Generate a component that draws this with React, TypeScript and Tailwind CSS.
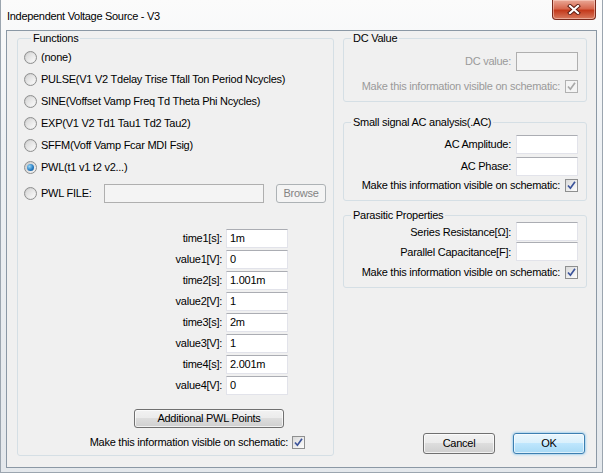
import React from 'react';

const ui = "font-['Liberation_Sans',Arial,sans-serif] text-[11px] tracking-[-0.25px] leading-[13px]";

function Radio({ checked }: { checked?: boolean }) {
  return (
    <span className="flex h-[13px] w-[13px] shrink-0 items-center justify-center rounded-full border border-[#8e8f8f] bg-[linear-gradient(135deg,#c9c9c9,#f7f7f7)]">
      {checked ? (
        <span className="h-[7px] w-[7px] rounded-full bg-[radial-gradient(circle_at_35%_35%,#9ad8f8,#2a7fc4_55%,#0d4a86)]" />
      ) : (
        <span className="h-[9px] w-[9px] rounded-full bg-[linear-gradient(135deg,#d6d6d6,#fbfbfb)]" />
      )}
    </span>
  );
}

function Check({ disabled }: { disabled?: boolean }) {
  return (
    <span
      className={
        disabled
          ? 'flex h-[13px] w-[13px] shrink-0 items-center justify-center border border-[#b1b1b1] bg-[#f4f4f4]'
          : 'flex h-[13px] w-[13px] shrink-0 items-center justify-center border border-[#8e8f8f] bg-[linear-gradient(135deg,#dadada,#fdfdfd)]'
      }
    >
      <svg width="11" height="11" viewBox="0 0 11 11">
        <path
          d="M2 5.5 L4.4 8.2 L9 1.8"
          fill="none"
          stroke={disabled ? '#a8a8a8' : '#3b539a'}
          strokeWidth="1.7"
        />
      </svg>
    </span>
  );
}

function Field({ value, disabled }: { value?: string; disabled?: boolean }) {
  return (
    <div
      className={
        disabled
          ? 'flex h-[19px] w-[62px] items-center border border-[#afafaf] bg-[#f4f4f4] pl-[3px]'
          : 'flex h-[19px] w-[62px] items-center border border-[#e2e3ea] border-t-[#abadb3] bg-white pl-[3px]'
      }
    >
      {value}
    </div>
  );
}

const btn =
  'rounded-[3px] border border-[#707070] bg-[linear-gradient(to_bottom,#f2f2f2_0%,#ebebeb_49%,#dddddd_50%,#cfcfcf_100%)] shadow-[inset_0_0_0_1px_rgba(255,255,255,0.7)] text-black';

const functions = [
  '(none)',
  'PULSE(V1 V2 Tdelay Trise Tfall Ton Period Ncycles)',
  'SINE(Voffset Vamp Freq Td Theta Phi Ncycles)',
  'EXP(V1 V2 Td1 Tau1 Td2 Tau2)',
  'SFFM(Voff Vamp Fcar MDI Fsig)',
  'PWL(t1 v1 t2 v2...)',
];

const points = [
  ['time1[s]:', '1m'],
  ['value1[V]:', '0'],
  ['time2[s]:', '1.001m'],
  ['value2[V]:', '1'],
  ['time3[s]:', '2m'],
  ['value3[V]:', '1'],
  ['time4[s]:', '2.001m'],
  ['value4[V]:', '0'],
];

export default function App() {
  return (
    <div className={`flex h-[473px] w-[603px] flex-col border-l border-r border-b border-[#9ba5af] bg-[linear-gradient(to_bottom,#fbfbfb,#eef1f4_30%,#e4e8ec)] ${ui}`}>
      {/* title bar */}
      <div className="relative h-[30px] shrink-0">
        <div className="pl-[6px] pt-[10px] text-[11px] tracking-[-0.3px] text-black [text-shadow:0_0_6px_#fff]">
          Independent Voltage Source - V3
        </div>
        <div className="absolute right-[6px] top-0 flex h-[20px] w-[44px] items-center justify-center rounded-b-[4px] border border-t-0 border-[#7a2a1c] bg-[linear-gradient(to_bottom,#eaa897_0%,#d7684f_45%,#c43a1c_55%,#d87a5f_100%)] shadow-[inset_0_0_0_1px_rgba(255,220,210,0.5)]">
          <svg width="14" height="11" viewBox="0 0 14 11">
            <path d="M3 2 L11 9 M11 2 L3 9" stroke="#5a1a10" strokeWidth="4" strokeLinecap="square" />
            <path d="M3 2 L11 9 M11 2 L3 9" stroke="#ffffff" strokeWidth="2.2" strokeLinecap="square" />
          </svg>
        </div>
      </div>

      {/* client area */}
      <div className="ml-[5px] mr-[5px] flex h-[438px] border border-[#8b98a5] bg-[#f0f0f0] pl-[10px] pt-[1px] text-black">
        {/* Functions */}
        <fieldset className="w-[317px] self-start rounded-[3px] border border-[#d5dfe5] pb-[5px] pl-[6px]">
          <legend className="ml-[7px] px-[2px]">Functions</legend>
          <div className="pt-[1px]">
            {functions.map((f, i) => (
              <div key={f} className="flex h-[22px] items-center gap-[4px]">
                <Radio checked={i === 5} />
                <span>{f}</span>
              </div>
            ))}
          </div>
          <div className="mt-[6px] flex h-[19px] items-center">
            <Radio />
            <span className="ml-[4px] w-[63px]">PWL FILE:</span>
            <div className="h-[19px] w-[160px] border border-[#afafaf] bg-[#f4f4f4]" />
            <button className="ml-[12px] h-[19px] w-[50px] rounded-[3px] border border-[#adb2b5] bg-[#f4f4f4] text-[#838383]">
              Browse
            </button>
          </div>

          <div className="mt-[25px] pr-[45px]">
            {points.map(([label, value]) => (
              <div key={label} className="flex h-[21px] items-center justify-end gap-[4px]">
                <span>{label}</span>
                <Field value={value} />
              </div>
            ))}
          </div>

          <div className="mt-[13px] flex justify-end pr-[49px]">
            <button className={`h-[19px] w-[150px] ${btn}`}>Additional PWL Points</button>
          </div>
          <div className="mt-[7px] flex h-[15px] items-center justify-end gap-[4px] pr-[28px]">
            <span>Make this information visible on schematic:</span>
            <Check />
          </div>
        </fieldset>

        {/* right column */}
        <div className="ml-[9px] flex w-[244px] flex-col pb-[13px]">
          <fieldset className="rounded-[3px] border border-[#d5dfe5] pb-[7px] pr-[8px]">
            <legend className="ml-[7px] px-[2px]">DC Value</legend>
            <div className="mt-[6px] flex h-[21px] items-center justify-end gap-[5px] text-[#9a9a9a]">
              <span>DC value:</span>
              <Field disabled />
            </div>
            <div className="mt-[7px] flex h-[15px] items-center justify-end gap-[5px] text-[#9a9a9a]">
              <span>Make this information visible on schematic:</span>
              <Check disabled />
            </div>
          </fieldset>

          <fieldset className="mt-[14px] rounded-[3px] border border-[#d5dfe5] pb-[7px] pr-[8px]">
            <legend className="ml-[7px] px-[2px]">Small signal AC analysis(.AC)</legend>
            <div className="pt-[4px]">
              <div className="flex h-[22px] items-center justify-end gap-[5px]">
                <span>AC Amplitude:</span>
                <Field />
              </div>
              <div className="flex h-[22px] items-center justify-end gap-[5px]">
                <span>AC Phase:</span>
                <Field />
              </div>
            </div>
            <div className="mt-[1px] flex h-[15px] items-center justify-end gap-[5px]">
              <span>Make this information visible on schematic:</span>
              <Check />
            </div>
          </fieldset>

          <fieldset className="mt-[8px] rounded-[3px] border border-[#d5dfe5] pb-[7px] pr-[8px]">
            <legend className="ml-[7px] px-[2px]">Parasitic Properties</legend>
            <div className="flex h-[20px] items-start justify-end gap-[5px]">
              <span className="self-center">Series Resistance[Ω]:</span>
              <Field />
            </div>
            <div className="flex h-[20px] items-start justify-end gap-[5px]">
              <span className="self-center">Parallel Capacitance[F]:</span>
              <Field />
            </div>
            <div className="mt-[3px] flex h-[15px] items-center justify-end gap-[5px]">
              <span>Make this information visible on schematic:</span>
              <Check />
            </div>
          </fieldset>

          <div className="mt-auto flex justify-end gap-[18px] pr-[2px]">
            <button className={`h-[21px] w-[72px] ${btn}`}>Cancel</button>
            <button className="h-[21px] w-[72px] rounded-[3px] border border-[#3c7fb1] bg-[linear-gradient(to_bottom,#eaf6fd_0%,#d9f0fc_49%,#bee6fd_50%,#a7d9f5_100%)] text-black shadow-[0_0_3px_#5fb6ee,inset_0_0_0_1px_rgba(255,255,255,0.6)]">
              OK
            </button>
          </div>
        </div>
      </div>
    </div>
  );
}
